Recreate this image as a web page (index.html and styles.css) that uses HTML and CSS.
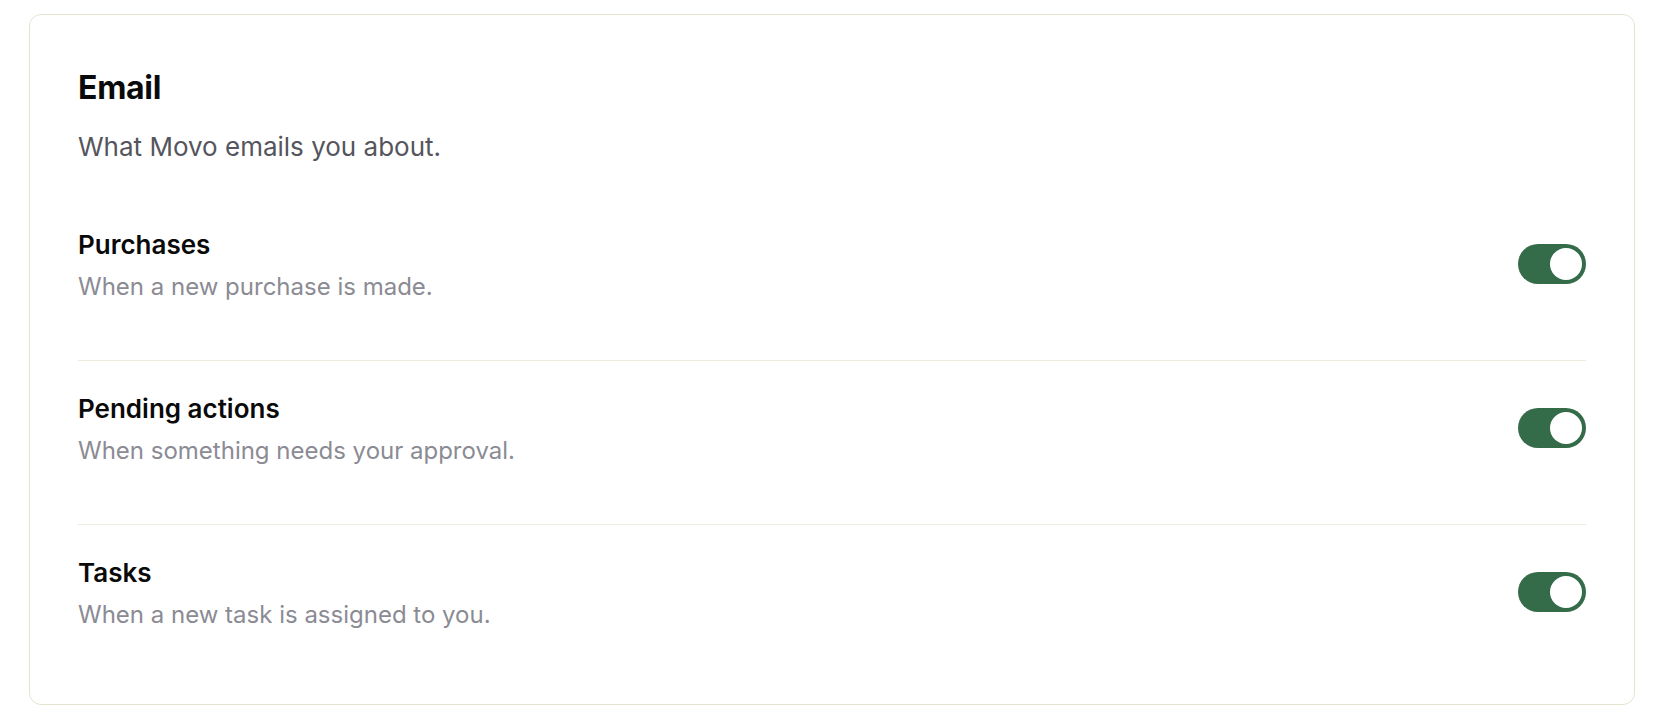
FILE: index.html
```html
<!DOCTYPE html>
<html lang="en">
<head>
    <meta charset="UTF-8">
    <meta name="viewport" content="width=device-width, initial-scale=1.0">
    <title>Notifications</title>
    <link rel="stylesheet" href="styles.css">
</head>
<body>
    <div class="card">
        <div class="card-header">
            <h2 class="card-title">Email</h2>
            <p class="card-subtitle">What Movo emails you about.</p>
        </div>

        <div class="setting-list">
            <div class="setting-row">
                <div class="setting-text">
                    <h3 class="setting-name">Purchases</h3>
                    <p class="setting-desc">When a new purchase is made.</p>
                </div>
                <button class="toggle is-on" aria-pressed="true"><span class="toggle-knob"></span></button>
            </div>

            <div class="setting-row">
                <div class="setting-text">
                    <h3 class="setting-name">Pending actions</h3>
                    <p class="setting-desc">When something needs your approval.</p>
                </div>
                <button class="toggle is-on" aria-pressed="true"><span class="toggle-knob"></span></button>
            </div>

            <div class="setting-row">
                <div class="setting-text">
                    <h3 class="setting-name">Tasks</h3>
                    <p class="setting-desc">When a new task is assigned to you.</p>
                </div>
                <button class="toggle is-on" aria-pressed="true"><span class="toggle-knob"></span></button>
            </div>
        </div>
    </div>
</body>
</html>
```

FILE: styles.css
```css
* {
    margin: 0;
    padding: 0;
    box-sizing: border-box;
}

body {
    font-family: Inter, "Noto Sans", Arial, sans-serif;
    background-color: #fff;
    color: #0a0a0a;
    padding: 14px 23px 0 29px;
}

.card {
    border: 1px solid #e6e2d0;
    border-radius: 12px;
    padding: 51px 48px 24px;
    height: 691px;
}

.card-title {
    font-size: 32px;
    font-weight: 700;
    line-height: 44px;
    letter-spacing: -0.3px;
}

.card-subtitle {
    margin-top: 20px;
    font-size: 26px;
    line-height: 33px;
    color: #55555d;
}

.setting-list {
    margin-top: 34px;
}

.setting-row {
    display: flex;
    align-items: center;
    justify-content: space-between;
    padding: 31px 0 24px;
}

.setting-row:not(:last-child) {
    padding-bottom: 56px;
    border-bottom: 1px solid #efebdd;
}

.setting-name {
    font-size: 26px;
    font-weight: 600;
    line-height: 34px;
}

.setting-desc {
    margin-top: 8px;
    font-size: 24px;
    line-height: 34px;
    color: #8b8b94;
}

.toggle {
    width: 68px;
    height: 40px;
    margin-bottom: 4px;
    border: none;
    border-radius: 20px;
    background-color: #346b48;
    padding: 4px;
    display: flex;
    justify-content: flex-start;
    cursor: pointer;
}

.toggle.is-on {
    justify-content: flex-end;
}

.toggle-knob {
    width: 32px;
    height: 32px;
    border-radius: 50%;
    background-color: #fff;
}
```
